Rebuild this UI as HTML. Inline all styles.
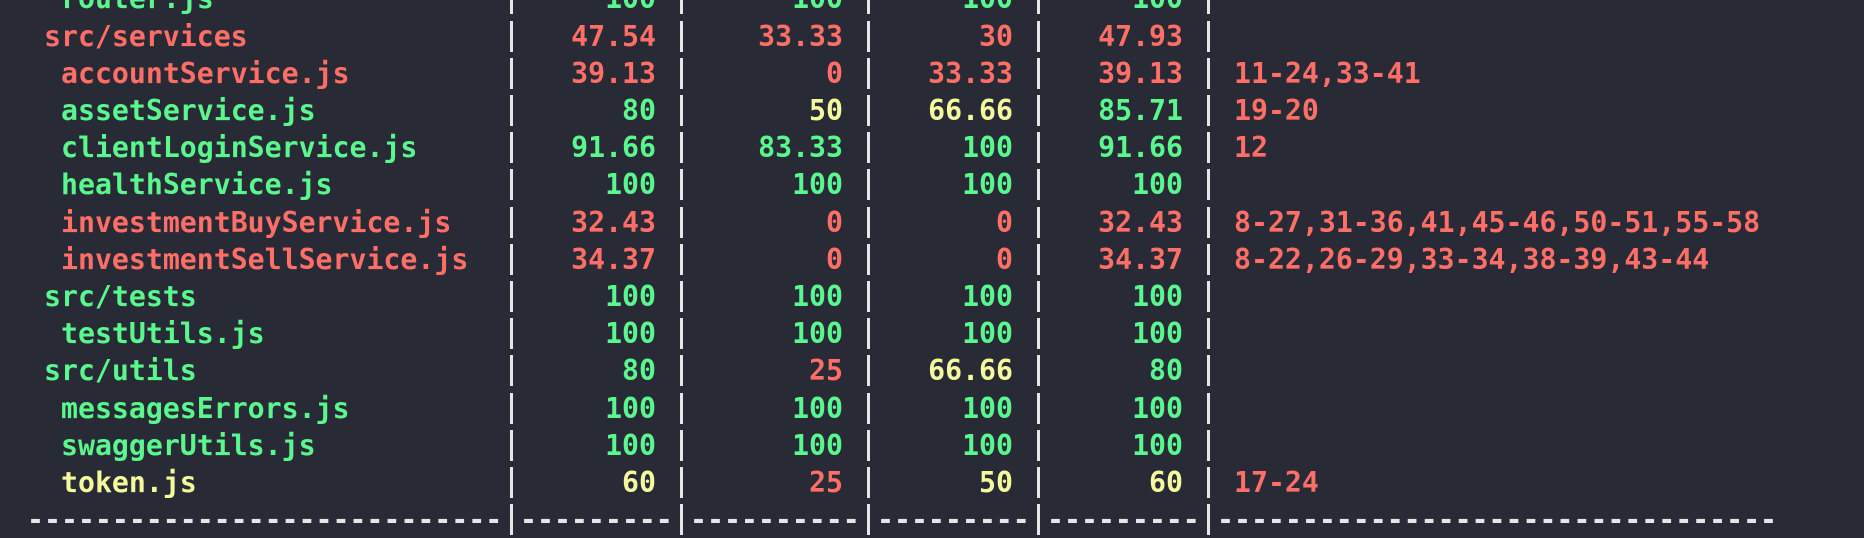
<!DOCTYPE html>
<html><head><meta charset="utf-8"><style>
html,body{margin:0;padding:0;}
body{width:1864px;height:526px;background:#282a36;overflow:hidden;position:relative;font-family:"DejaVu Sans Mono","Liberation Mono",monospace;font-weight:bold;font-size:28.2px;}
.r{position:absolute;left:0;width:1864px;height:37.2px;line-height:37.2px;}
.c{position:absolute;top:0;white-space:pre;}
.v1{left:520px;width:136px;text-align:right}
.v2{left:690px;width:153px;text-align:right}
.v3{left:877px;width:136px;text-align:right}
.v4{left:1047px;width:136px;text-align:right}
.u{left:1234px}
.d{left:44px}.f{left:61px}
.p{position:absolute;top:3px;height:31px;width:2.5px;background:#e6e6e6}
.p1{left:510px}.p2{left:680px}.p3{left:867px}.p4{left:1037px}.p5{left:1207px}
.g{color:#5af78e}.R{color:#ff6e67}.y{color:#f4f99d}.w{color:#e6e6e6}
</style></head><body>

<div class="r" style="top:-19.6px"><span class="c f g">router.js</span><i class="p p1"></i><span class="c v1 g">100</span><i class="p p2"></i><span class="c v2 g">100</span><i class="p p3"></i><span class="c v3 g">100</span><i class="p p4"></i><span class="c v4 g">100</span><i class="p p5"></i></div>

<div class="r" style="top:17.6px"><span class="c d R">src/services</span><i class="p p1"></i><span class="c v1 R">47.54</span><i class="p p2"></i><span class="c v2 R">33.33</span><i class="p p3"></i><span class="c v3 R">30</span><i class="p p4"></i><span class="c v4 R">47.93</span><i class="p p5"></i></div>

<div class="r" style="top:54.8px"><span class="c f R">accountService.js</span><i class="p p1"></i><span class="c v1 R">39.13</span><i class="p p2"></i><span class="c v2 R">0</span><i class="p p3"></i><span class="c v3 R">33.33</span><i class="p p4"></i><span class="c v4 R">39.13</span><i class="p p5"></i><span class="c u R">11-24,33-41</span></div>

<div class="r" style="top:92px"><span class="c f g">assetService.js</span><i class="p p1"></i><span class="c v1 g">80</span><i class="p p2"></i><span class="c v2 y">50</span><i class="p p3"></i><span class="c v3 y">66.66</span><i class="p p4"></i><span class="c v4 g">85.71</span><i class="p p5"></i><span class="c u R">19-20</span></div>

<div class="r" style="top:129.2px"><span class="c f g">clientLoginService.js</span><i class="p p1"></i><span class="c v1 g">91.66</span><i class="p p2"></i><span class="c v2 g">83.33</span><i class="p p3"></i><span class="c v3 g">100</span><i class="p p4"></i><span class="c v4 g">91.66</span><i class="p p5"></i><span class="c u R">12</span></div>

<div class="r" style="top:166.4px"><span class="c f g">healthService.js</span><i class="p p1"></i><span class="c v1 g">100</span><i class="p p2"></i><span class="c v2 g">100</span><i class="p p3"></i><span class="c v3 g">100</span><i class="p p4"></i><span class="c v4 g">100</span><i class="p p5"></i></div>

<div class="r" style="top:203.6px"><span class="c f R">investmentBuyService.js</span><i class="p p1"></i><span class="c v1 R">32.43</span><i class="p p2"></i><span class="c v2 R">0</span><i class="p p3"></i><span class="c v3 R">0</span><i class="p p4"></i><span class="c v4 R">32.43</span><i class="p p5"></i><span class="c u R">8-27,31-36,41,45-46,50-51,55-58</span></div>

<div class="r" style="top:240.8px"><span class="c f R">investmentSellService.js</span><i class="p p1"></i><span class="c v1 R">34.37</span><i class="p p2"></i><span class="c v2 R">0</span><i class="p p3"></i><span class="c v3 R">0</span><i class="p p4"></i><span class="c v4 R">34.37</span><i class="p p5"></i><span class="c u R">8-22,26-29,33-34,38-39,43-44</span></div>

<div class="r" style="top:278px"><span class="c d g">src/tests</span><i class="p p1"></i><span class="c v1 g">100</span><i class="p p2"></i><span class="c v2 g">100</span><i class="p p3"></i><span class="c v3 g">100</span><i class="p p4"></i><span class="c v4 g">100</span><i class="p p5"></i></div>

<div class="r" style="top:315.2px"><span class="c f g">testUtils.js</span><i class="p p1"></i><span class="c v1 g">100</span><i class="p p2"></i><span class="c v2 g">100</span><i class="p p3"></i><span class="c v3 g">100</span><i class="p p4"></i><span class="c v4 g">100</span><i class="p p5"></i></div>

<div class="r" style="top:352.4px"><span class="c d g">src/utils</span><i class="p p1"></i><span class="c v1 g">80</span><i class="p p2"></i><span class="c v2 R">25</span><i class="p p3"></i><span class="c v3 y">66.66</span><i class="p p4"></i><span class="c v4 g">80</span><i class="p p5"></i></div>

<div class="r" style="top:389.6px"><span class="c f g">messagesErrors.js</span><i class="p p1"></i><span class="c v1 g">100</span><i class="p p2"></i><span class="c v2 g">100</span><i class="p p3"></i><span class="c v3 g">100</span><i class="p p4"></i><span class="c v4 g">100</span><i class="p p5"></i></div>

<div class="r" style="top:426.8px"><span class="c f g">swaggerUtils.js</span><i class="p p1"></i><span class="c v1 g">100</span><i class="p p2"></i><span class="c v2 g">100</span><i class="p p3"></i><span class="c v3 g">100</span><i class="p p4"></i><span class="c v4 g">100</span><i class="p p5"></i></div>

<div class="r" style="top:464px"><span class="c f y">token.js</span><i class="p p1"></i><span class="c v1 y">60</span><i class="p p2"></i><span class="c v2 R">25</span><i class="p p3"></i><span class="c v3 y">50</span><i class="p p4"></i><span class="c v4 y">60</span><i class="p p5"></i><span class="c u R">17-24</span></div>

<div class="r" style="top:501.2px"><span class="c w" style="left:27px">----------------------------</span><i class="p p1"></i><span class="c w" style="left:520px">---------</span><i class="p p2"></i><span class="c w" style="left:690px">----------</span><i class="p p3"></i><span class="c w" style="left:877px">---------</span><i class="p p4"></i><span class="c w" style="left:1047px">---------</span><i class="p p5"></i><span class="c w" style="left:1217px">---------------------------------</span></div>

</body></html>
